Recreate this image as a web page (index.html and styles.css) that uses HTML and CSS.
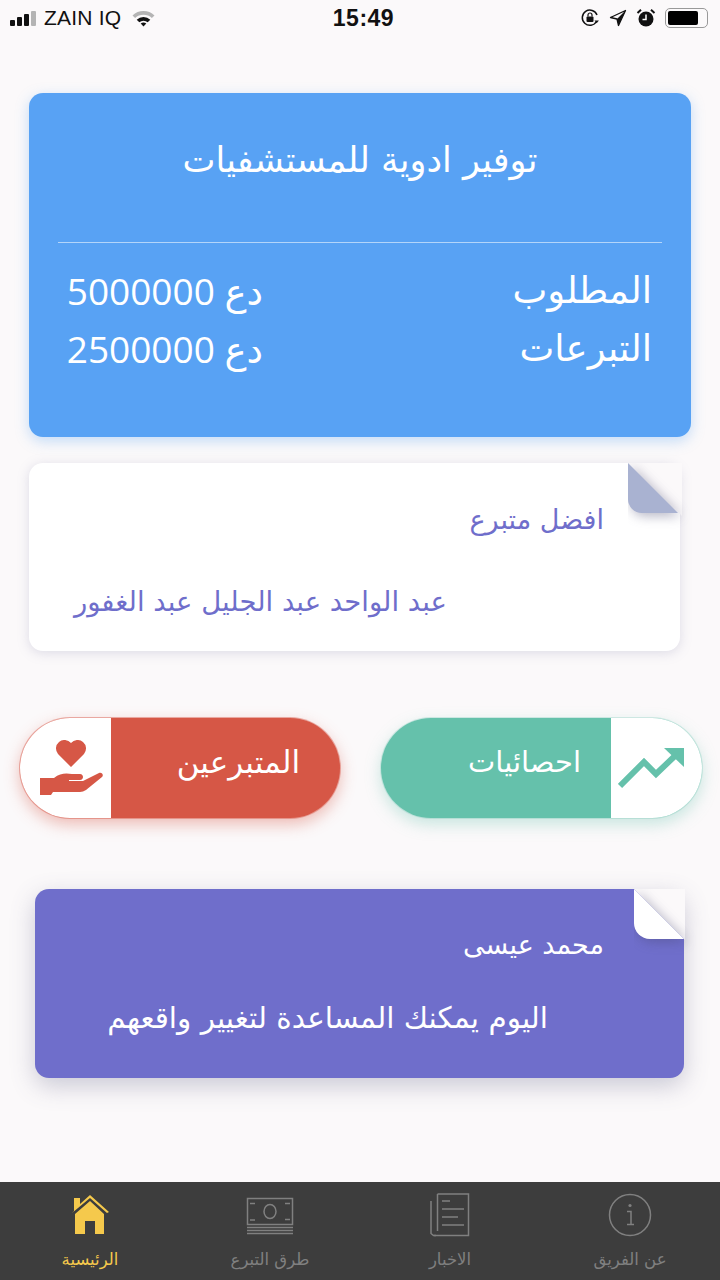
FILE: index.html
```html
<!DOCTYPE html>
<html>
	<head>
		<meta charset="UTF-8">
		<title></title>
		<link rel="stylesheet" href="styles.css">
	</head>
	<body>
		<div class="status">
			<div class="status-left">
				<div class="signal"><i></i><i></i><i></i><i class="off"></i></div>
				<span class="carrier">ZAIN IQ</span>
				<svg class="wifi" width="25" height="18" viewBox="0 0 24 18">
					<path d="M1 6.500a16 16 0 0 1 22 0l-2.600 2.600a12.400 12.400 0 0 0-16.800 0z" fill="#b4b4b4"/>
					<path d="M5.200 10.700a10 10 0 0 1 13.600 0l-2.600 2.500a6.400 6.400 0 0 0-8.400 0z" fill="#111"/>
					<path d="M9.200 14.600a4.400 4.400 0 0 1 5.600 0L12 17.400z" fill="#111"/>
				</svg>
			</div>
			<span class="clock">15:49</span>
			<div class="status-right">
				<svg width="20" height="20" viewBox="0 0 20 20">
					<path d="M16.500 13.500A7.600 7.600 0 1 1 17 7" fill="none" stroke="#111" stroke-width="1.500"/>
					<path d="M14.500 12.500h4.400l-2.200 2.800z" fill="#111"/>
					<rect x="6.500" y="8.500" width="7" height="5.500" rx="1" fill="#111"/>
					<path d="M8 8.500V7a2 2 0 0 1 4 0v1.500" fill="none" stroke="#111" stroke-width="1.200"/>
				</svg>
				<svg width="18" height="18" viewBox="0 0 18 18">
					<path d="M16.500 1.500L9.500 16.500 8 10 1.500 8.500z" fill="none" stroke="#111" stroke-width="1.300" stroke-linejoin="round"/>
					<path d="M16.500 1.500L8 10l1.500 6.500z" fill="#111"/>
				</svg>
				<svg width="20" height="20" viewBox="0 0 20 20">
					<circle cx="10" cy="11" r="7.500" fill="#111"/>
					<path d="M10 6.500V11.500H6.500" fill="none" stroke="#fff" stroke-width="1.500"/>
					<path d="M1.500 5L5 1.800M18.500 5L15 1.800" stroke="#111" stroke-width="2"/>
				</svg>
				<div class="battery"><div class="battery-level"></div></div>
			</div>
		</div>

		<div class="main">
			<div class="goal-card">
				<h1 class="goal-title">توفير ادوية للمستشفيات</h1>
				<div class="goal-line"></div>
				<div class="goal-row"><span>المطلوب</span><span class="goal-value">دع 5000000</span></div>
				<div class="goal-row"><span>التبرعات</span><span class="goal-value">دع 2500000</span></div>
			</div>

			<div class="note note-white">
				<p class="note-head">افضل متبرع</p>
				<p class="note-text">عبد الواحد عبد الجليل عبد الغفور</p>
				<svg class="fold" width="70" height="70" viewBox="0 0 70 70">
					<path d="M0 0H54V53z" fill="#fbf9fa"/>
					<path class="fold-paper" d="M0 0L50 50H14A14 14 0 0 1 0 36z" fill="#a9b2d1"/>
				</svg>
			</div>

			<div class="buttons">
				<div class="pill pill-green">
					<div class="pill-icon">
						<svg width="68" height="42" viewBox="0 0 68 42">
							<path d="M2 39L26 15 38 27 60 6" fill="none" stroke="#65c1ab" stroke-width="6"/>
							<path d="M46 1H66V20z" fill="#65c1ab"/>
						</svg>
					</div>
					<span class="pill-text">احصائيات</span>
				</div>
				<div class="pill pill-red">
					<span class="pill-text">المتبرعين</span>
					<div class="pill-icon">
						<svg width="64" height="56" viewBox="0 0 64 56">
							<path d="M32 27L19 14a8.500 8.500 0 0 1 13-11 8.500 8.500 0 0 1 13 11z" fill="#d65746"/>
							<path d="M1 38h14c6-5 12-5 18-4h8c4 0 4 6 0 6H30v1h14l16-8c3-1 5 2 3 4L47 50c-2 1-4 2-6 2H14l-2 3H1z" fill="#d65746"/>
						</svg>
					</div>
				</div>
			</div>

			<div class="note note-purple">
				<p class="note-head">محمد عيسى</p>
				<p class="note-text">اليوم يمكنك المساعدة لتغيير واقعهم</p>
				<svg class="fold" width="70" height="70" viewBox="0 0 70 70">
					<path d="M0 0H51V51z" fill="#fbf9fa"/>
					<path class="fold-paper" d="M0 0L50 50H16A16 16 0 0 1 0 34z" fill="#fff"/>
				</svg>
			</div>
		</div>

		<div class="tabs">
			<div class="tab tab-on">
				<svg width="44" height="44" viewBox="0 0 44 44">
					<path d="M6 18V5h6v6L22 2l19 17-2 1L22 5 4 20z" fill="#f5c94c"/>
					<path d="M7 21L22 8l14 13v20H27V28H17v13H7z" fill="#f5c94c"/>
				</svg>
				<span>الرئيسية</span>
			</div>
			<div class="tab">
				<svg width="48" height="44" viewBox="0 0 48 44">
					<path d="M1.500 5.500H46.500V31.500H1.500zM4 10.500H9M39 10.500H44M4 27H9M39 26.500H44" fill="none" stroke="#808080" stroke-width="1.500"/>
					<ellipse cx="24" cy="18.500" rx="6" ry="7" fill="none" stroke="#808080" stroke-width="1.500"/>
					<path d="M1 34.500H47M1 37.500H47M1 40.500H47" stroke="#808080" stroke-width="1.500"/>
				</svg>
				<span>طرق التبرع</span>
			</div>
			<div class="tab">
				<svg width="40" height="44" viewBox="0 0 40 44">
					<path d="M7.500 1H38.500V42.500H4" fill="none" stroke="#808080" stroke-width="1.500"/>
					<path d="M7.500 1V38M1 8V40.500L3.500 42.500H6" fill="none" stroke="#808080" stroke-width="1.500"/>
					<path d="M12 8H20M12 16H34M12 24H28M12 32H34" stroke="#808080" stroke-width="1.500"/>
				</svg>
				<span>الاخبار</span>
			</div>
			<div class="tab">
				<svg width="44" height="44" viewBox="0 0 44 44">
					<circle cx="22" cy="22" r="20.500" fill="none" stroke="#808080" stroke-width="1.500"/>
					<circle cx="22" cy="12.500" r="1.600" fill="#808080"/>
					<path d="M19 18.500H23V31M19 31.500H26" fill="none" stroke="#808080" stroke-width="1.500"/>
				</svg>
				<span>عن الفريق</span>
			</div>
		</div>
	</body>
</html>
```

FILE: styles.css
```css
*{
	box-sizing: border-box;
}
body{
	margin: 0;
	width: 720px;
	height: 1280px;
	background: #fbf9fa;
	font-family: "DejaVu Sans", "Noto Sans", sans-serif;
	display: flex;
	flex-direction: column;
	overflow: hidden;
}
p, h1{
	margin: 0;
	font-weight: normal;
}

/* status bar */
.status{
	height: 40px;
	padding: 0 12px 4px 10px;
	display: flex;
	align-items: center;
	justify-content: space-between;
	color: #111;
	font-family: "Liberation Sans", sans-serif;
}
.status-left{
	width: 245px;
	display: flex;
	align-items: center;
}
.signal{
	display: flex;
	align-items: flex-end;
	gap: 2px;
	height: 15px;
	margin-right: 8px;
}
.signal i{
	width: 5px;
	background: #111;
	border-radius: 1px;
}
.signal i:nth-child(1){ height: 6px; }
.signal i:nth-child(2){ height: 9px; }
.signal i:nth-child(3){ height: 12px; }
.signal i:nth-child(4){ height: 15px; }
.signal .off{
	background: #b4b4b4;
}
.carrier{
	font-size: 21px;
	letter-spacing: 0.2px;
}
.wifi{
	margin-left: 10px;
}
.clock{
	font-size: 23px;
	font-weight: bold;
	letter-spacing: 0.5px;
}
.status-right{
	width: 236px;
	display: flex;
	align-items: center;
	justify-content: flex-end;
	gap: 9px;
}
.battery{
	width: 43px;
	height: 20px;
	border: 1.5px solid #999;
	border-radius: 5px;
	padding: 2px;
}
.battery-level{
	width: 30px;
	height: 100%;
	background: #000;
	border-radius: 2px;
}

/* cards */
.main{
	flex: 1;
	position: relative;
}
.goal-card{
	width: 662px;
	height: 344px;
	margin: 53px 0 0 29px;
	padding: 0 39px 0 29px;
	background: #58a2f4;
	border-radius: 14px;
	color: #fff;
	box-shadow: 0 4px 14px rgba(88, 162, 244, .35);
	direction: rtl;
}
.goal-title{
	height: 149px;
	padding: 47px 0 0 0;
	margin: 0 -10px 0 0;
	text-align: center;
	font-size: 35px;
}
.goal-line{
	height: 1px;
	margin: 0 -10px 18px 0;
	background: rgba(255, 255, 255, .55);
}
.goal-row{
	height: 58px;
	display: flex;
	justify-content: space-between;
	align-items: center;
	font-size: 37px;
}
.goal-value{
	width: 205px;
	white-space: nowrap;
	font-family: "Open Sans", "DejaVu Sans", sans-serif;
}

.note{
	position: relative;
	height: 188px;
	border-radius: 14px;
	direction: rtl;
}
.note-white{
	width: 651px;
	margin: 26px 0 0 29px;
	padding: 40px 76px 0 0;
	background: #fff;
	color: #6f6ecb;
	box-shadow: 0 2px 12px rgba(130, 130, 170, .25);
}
.note-purple{
	width: 649px;
	height: 189px;
	margin: 71px 0 0 35px;
	padding: 39px 80px 0 0;
	background: #6f6ecb;
	color: #fff;
	box-shadow: 0 8px 24px rgba(90, 90, 130, .3);
}
.note-head{
	font-size: 27px;
	line-height: 34px;
}
.note-text{
	font-size: 27.500px;
	line-height: 34px;
}
.note-white .note-text{
	padding-right: 157px;
	margin-top: 47px;
	margin-left: -80px;
}
.note-purple .note-text{
	padding-right: 56px;
	margin-top: 39px;
	margin-left: -80px;
	font-size: 29.500px;
}
.fold{
	position: absolute;
	top: 0;
	left: 599px;
}
.fold-paper{
	filter: drop-shadow(3px 3px 6px rgba(70, 70, 110, .4));
}

/* buttons */
.buttons{
	width: 682px;
	margin: 67px 0 0 20px;
	display: flex;
	justify-content: space-between;
	direction: rtl;
}
.pill{
	width: 321px;
	height: 100px;
	border-radius: 50px;
	overflow: hidden;
	display: flex;
	color: #fff;
}
.pill-green{
	background: #65c1ab;
	box-shadow: 0 0 0 1px rgba(101, 193, 171, .25), 0 6px 16px rgba(101, 193, 171, .35);
}
.pill-red{
	width: 320px;
	background: #d65746;
	box-shadow: 0 0 0 1px rgba(214, 87, 70, .45), 0 6px 16px rgba(214, 87, 70, .4);
	justify-content: space-between;
}
.pill-icon{
	width: 91px;
	background: #fff;
	display: flex;
	align-items: center;
	justify-content: center;
}
.pill-green .pill-icon{
	padding-right: 10px;
}
.pill-red .pill-icon{
	padding-left: 10px;
}
.pill-text{
	font-size: 29px;
	line-height: 88px;
}
.pill-green .pill-text{
	padding-right: 30px;
}
.pill-red .pill-text{
	padding-right: 40px;
	font-size: 31px;
}

/* bottom tabs */
.tabs{
	height: 98px;
	background: #3d3d3d;
	display: flex;
	align-items: flex-start;
}
.tab{
	width: 180px;
	padding-top: 11px;
	display: flex;
	flex-direction: column;
	align-items: center;
	color: #808080;
	font-size: 16.500px;
	line-height: 22px;
	gap: 12px;
}
.tab-on{
	color: #f5c94c;
}
```
